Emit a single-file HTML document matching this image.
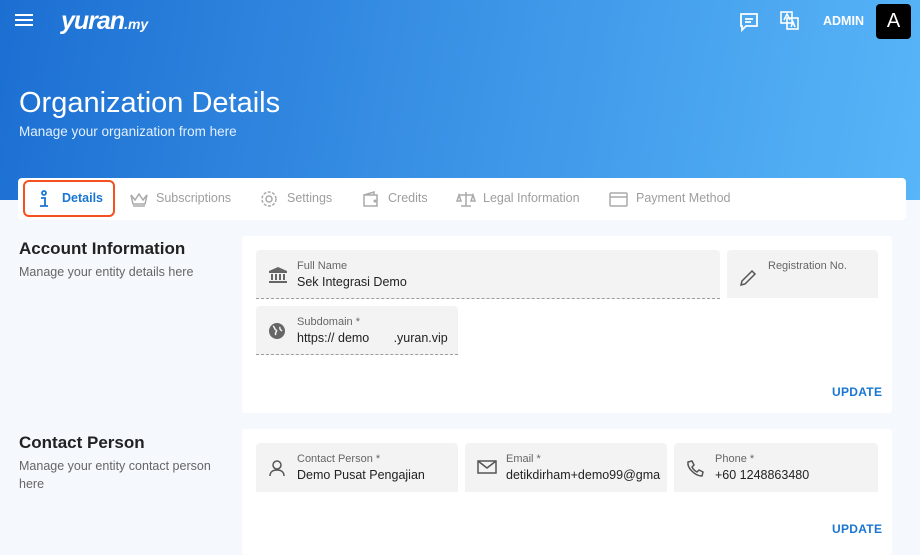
<!DOCTYPE html>
<html><head><meta charset="utf-8"><style>
*{box-sizing:border-box;margin:0;padding:0}
body{width:920px;height:555px;overflow:hidden;background:#f5f8fc;font-family:"Liberation Sans",Arial,sans-serif;position:relative}
.hdr{position:absolute;left:0;top:0;width:920px;height:200px;background:linear-gradient(100deg,#1c6fd2 0%,#3b93e6 50%,#58b5f8 100%)}
.abs{position:absolute}
.tabs{position:absolute;left:18px;top:178px;width:888px;height:42px;background:#fff;border-radius:4px}
.tt{position:absolute;top:13px;font-size:12.5px;color:#9e9e9e}
.ti{position:absolute}
.card{position:absolute;background:#fff;border-radius:3px}
.fld{position:absolute;background:#f3f3f3;border-radius:4px 4px 0 0;border-bottom:1px dashed #9e9e9e}
.fld .l{position:absolute;left:41px;top:10px;font-size:11px;color:#666}
.fld .v{position:absolute;left:41px;top:25px;font-size:12.5px;color:#222;white-space:nowrap;overflow:hidden;right:6px}
.fld svg{position:absolute;left:12px;top:16px}
.h{position:absolute;left:19px;font-size:17px;font-weight:bold;color:#222}
.s{position:absolute;left:19px;font-size:12.5px;color:#666;line-height:18px}
.upd{position:absolute;font-size:12px;font-weight:bold;color:#1976d2;letter-spacing:.3px}
</style></head><body>
<div class="hdr"></div>
<svg class="abs" style="left:15px;top:13px" width="18" height="14"><rect y="1" width="18" height="2" fill="#fff"/><rect y="6" width="18" height="2" fill="#fff"/><rect y="11" width="18" height="2" fill="#fff"/></svg>
<div class="abs" style="left:61px;top:7px;color:#fff;font-size:25px;font-weight:bold;font-style:italic;letter-spacing:-1px">yuran<span style="font-size:14px;letter-spacing:0">.my</span></div>
<svg class="abs" style="left:739px;top:12px" width="20" height="20" fill="none" stroke="#fff" stroke-width="1.8"><path d="M2 2h16v12H7l-4 4v-4H2z"/><path d="M6 7h8M6 10h6"/></svg>
<svg class="abs" style="left:780px;top:11px" width="20" height="20" fill="none" stroke="#fff" stroke-width="1.6"><rect x="1" y="1" width="11" height="11"/><rect x="7" y="7" width="11" height="11"/><path d="M4 9l3-6 3 6M11 16l2-5 2 5"/></svg>
<div class="abs" style="left:823px;top:14px;color:#fff;font-size:12.5px;font-weight:bold">ADMIN</div>
<div class="abs" style="left:876px;top:4px;width:35px;height:35px;background:#000;border-radius:4px;color:#fff;font-size:20px;text-align:center;line-height:35px">A</div>
<div class="abs" style="left:19px;top:87px;color:#fff;font-size:29px">Organization Details</div>
<div class="abs" style="left:19px;top:124px;color:#e3f0ff;font-size:13.5px">Manage your organization from here</div>
<div class="tabs">
<div class="abs" style="left:5px;top:2px;width:92px;height:37px;border:2px solid #f4511e;border-radius:6px"></div>
<svg class="ti" style="left:21px;top:12px" width="10" height="18" fill="none" stroke="#1976d2" stroke-width="1.8"><circle cx="5" cy="3" r="2"/><path d="M2 8h4v8M1 16h8"/></svg>
<div class="tt" style="left:44px;color:#1976d2;font-weight:bold">Details</div>
<svg class="ti" style="left:111px;top:13px" width="20" height="16" fill="none" stroke="#aaa" stroke-width="1.5"><path d="M2 4l4 5 4-6 4 6 4-5-2 9H4z"/><path d="M4 15h12"/></svg>
<div class="tt" style="left:138px">Subscriptions</div>
<svg class="ti" style="left:242px;top:12px" width="18" height="18" fill="none" stroke="#aaa" stroke-width="1.5"><circle cx="9" cy="9" r="3"/><circle cx="9" cy="9" r="7" stroke-dasharray="3 1.5"/></svg>
<div class="tt" style="left:269px">Settings</div>
<svg class="ti" style="left:344px;top:13px" width="18" height="16" fill="none" stroke="#aaa" stroke-width="1.5"><path d="M2 4h13v11H2zM2 4l10-3v3"/><circle cx="13" cy="10" r=".8"/></svg>
<div class="tt" style="left:370px">Credits</div>
<svg class="ti" style="left:438px;top:13px" width="20" height="16" fill="none" stroke="#aaa" stroke-width="1.5"><path d="M10 1v14M5 15h10M3 4h14M3 4l-2 6h4zM17 4l-2 6h4z"/></svg>
<div class="tt" style="left:465px">Legal Information</div>
<svg class="ti" style="left:591px;top:14px" width="19" height="15" fill="none" stroke="#aaa" stroke-width="1.5"><rect x="1" y="1" width="17" height="13" rx="1"/><path d="M1 5h17"/></svg>
<div class="tt" style="left:618px">Payment Method</div>
</div>
<div class="h" style="top:239px">Account Information</div>
<div class="s" style="top:263px">Manage your entity details here</div>
<div class="card" style="left:242px;top:236px;width:650px;height:177px">
<div class="fld" style="left:14px;top:14px;width:464px;height:49px"><svg width="20" height="18" fill="#666"><path d="M10 1L1 5v2h18V5z"/><rect x="3" y="8" width="2" height="6"/><rect x="7" y="8" width="2" height="6"/><rect x="11" y="8" width="2" height="6"/><rect x="15" y="8" width="2" height="6"/><rect x="1" y="15" width="18" height="2"/></svg><div class="l">Full Name</div><div class="v">Sek Integrasi Demo</div></div>
<div class="fld" style="left:485px;top:14px;width:151px;height:48px;border-bottom:none"><svg width="18" height="18" fill="none" stroke="#555" stroke-width="1.5" style="top:19px"><path d="M2 16l1-4L13 2l3 3L6 15z"/></svg><div class="l">Registration No.</div></div>
<div class="fld" style="left:14px;top:70px;width:202px;height:49px"><svg width="18" height="18"><circle cx="9" cy="9" r="8" fill="#666"/><path d="M5 4c2 1 1 3 3 4s-2 3 0 5M12 5c-1 2 1 3 2 4" stroke="#f3f3f3" stroke-width="1.5" fill="none"/></svg><div class="l">Subdomain *</div><div class="v">https:// demo&nbsp;&nbsp;&nbsp;&nbsp;&nbsp;&nbsp;&nbsp;.yuran.vip</div></div>
<div class="upd" style="left:590px;top:149px">UPDATE</div>
</div>
<div class="h" style="top:433px">Contact Person</div>
<div class="s" style="top:457px;width:200px">Manage your entity contact person here</div>
<div class="card" style="left:242px;top:429px;width:650px;height:126px">
<div class="fld" style="left:14px;top:14px;width:202px;height:49px;border-bottom:none"><svg width="18" height="18" fill="none" stroke="#555" stroke-width="1.5"><circle cx="9" cy="6" r="4"/><path d="M2 17c0-4 3-6 7-6s7 2 7 6"/></svg><div class="l">Contact Person *</div><div class="v">Demo Pusat Pengajian</div></div>
<div class="fld" style="left:223px;top:14px;width:202px;height:49px;border-bottom:none"><svg width="20" height="16" fill="none" stroke="#555" stroke-width="1.5"><rect x="1" y="2" width="18" height="12"/><path d="M1 2l9 7 9-7"/></svg><div class="l">Email *</div><div class="v">detikdirham+demo99@gmail.com</div></div>
<div class="fld" style="left:432px;top:14px;width:204px;height:49px;border-bottom:none"><svg width="18" height="18" fill="none" stroke="#555" stroke-width="1.5"><path d="M2 3l4-1 2 4-2 2c1 2 3 4 5 5l2-2 4 2-1 4C9 17 1 9 2 3z"/></svg><div class="l">Phone *</div><div class="v">+60 1248863480</div></div>
<div class="upd" style="left:590px;top:93px">UPDATE</div>
</div>
</body></html>
